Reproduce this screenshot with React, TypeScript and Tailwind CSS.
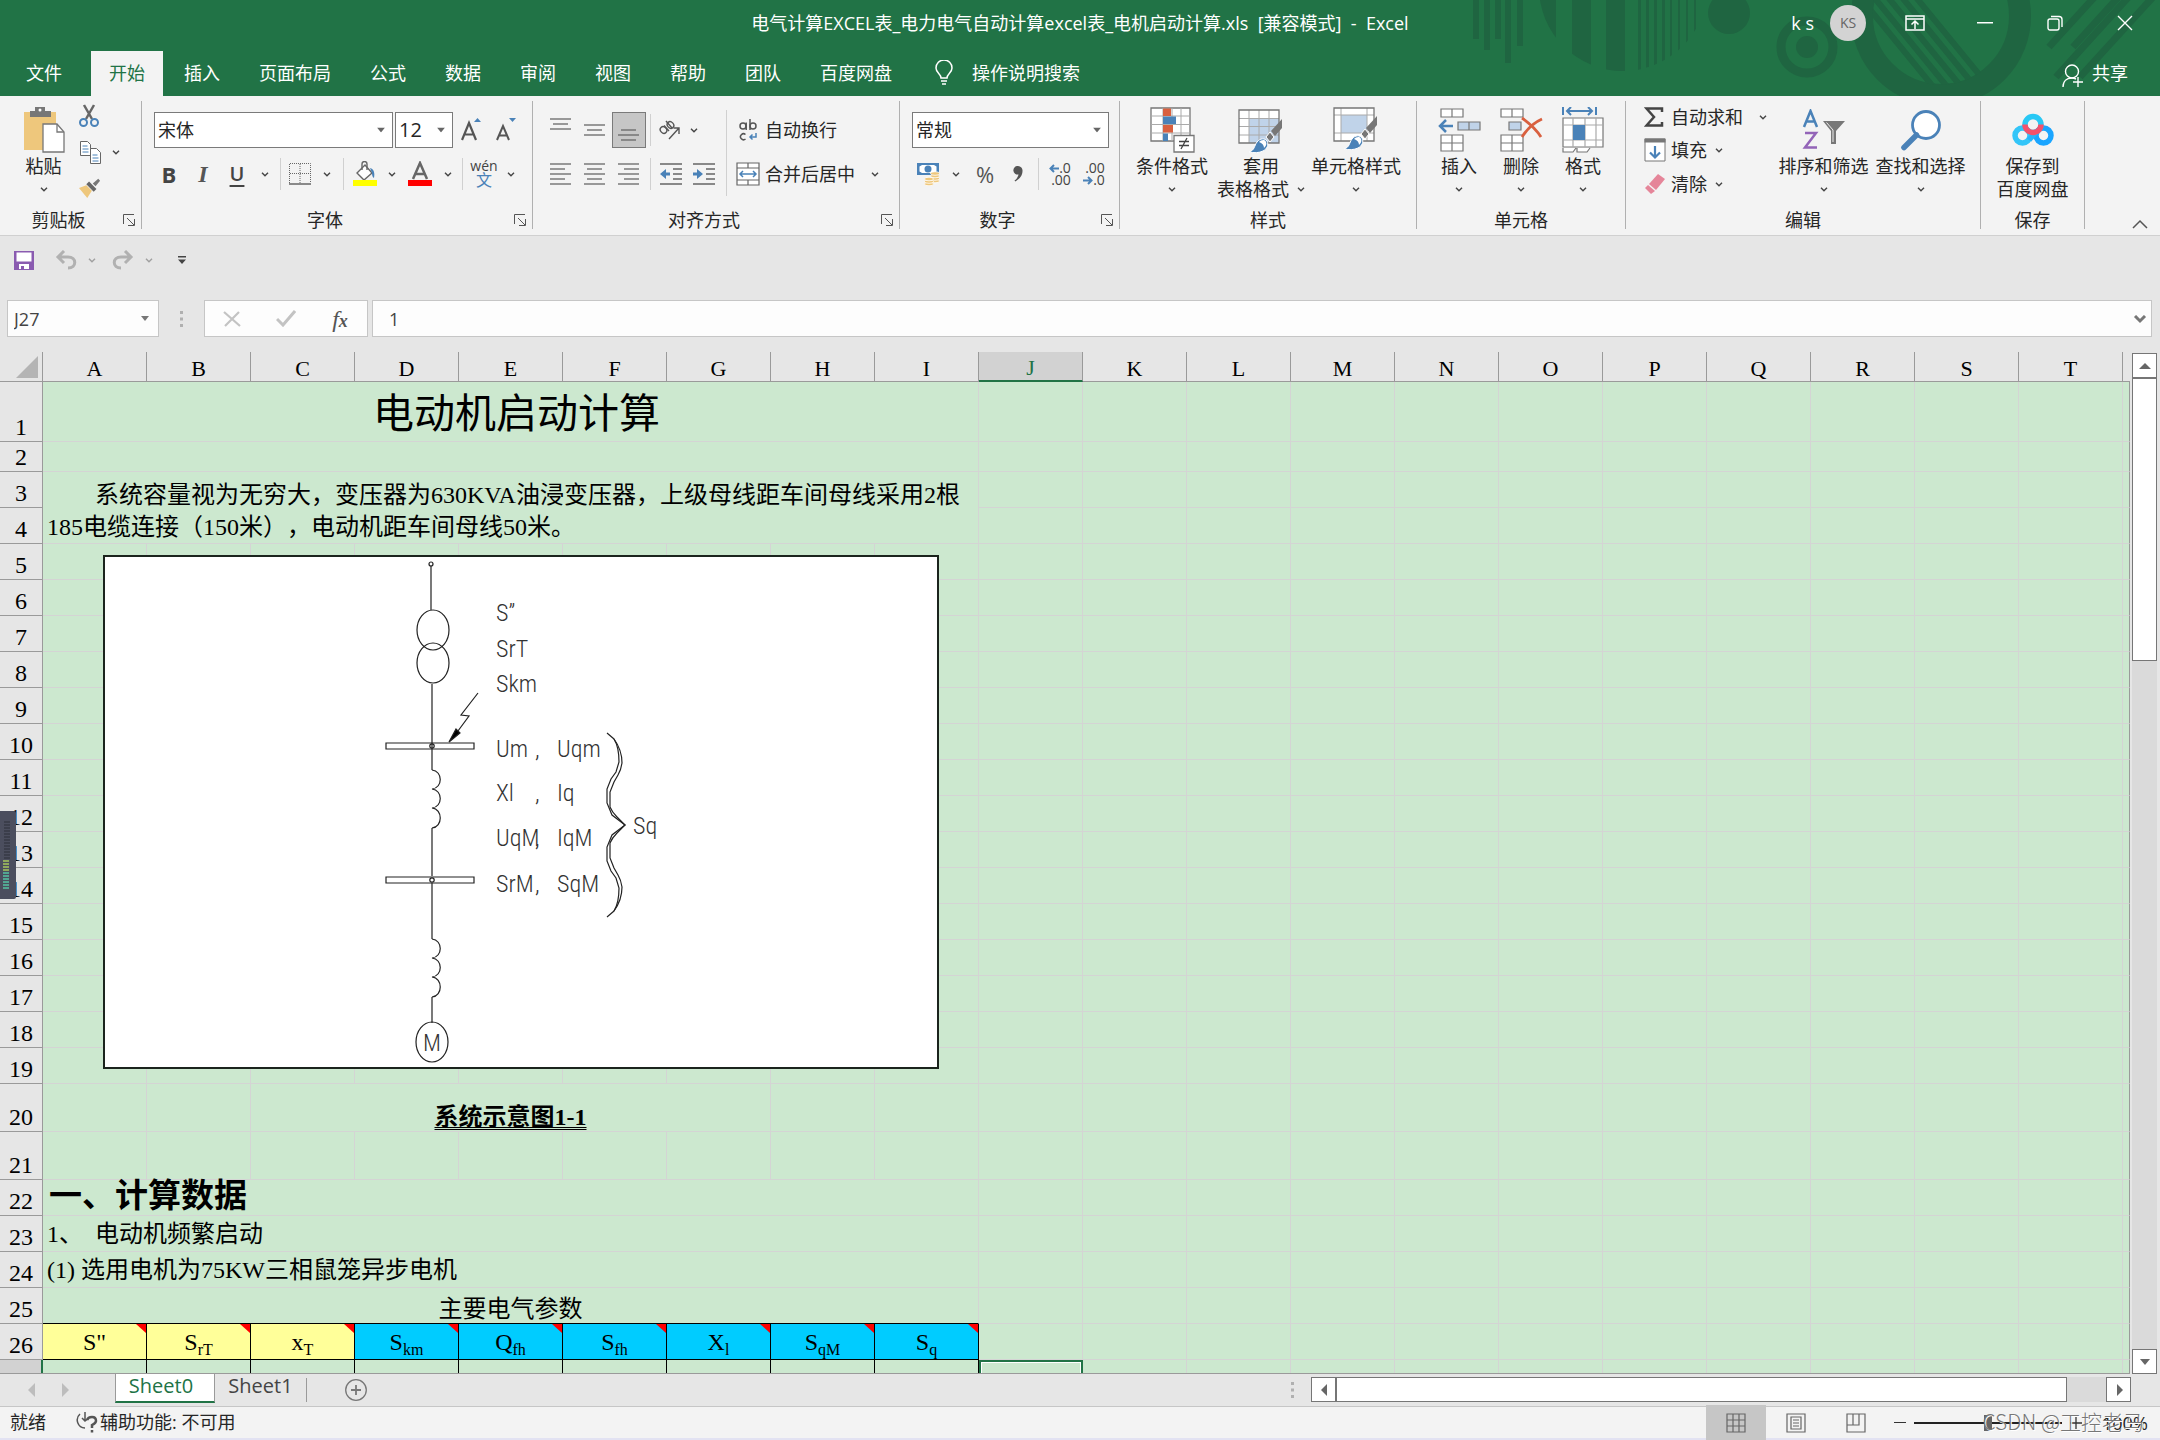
import { useState, type ReactNode } from "react";

const INK = "#444444";
const BLUE = "#4a82b8";

const TABS = ["插入", "页面布局", "公式", "数据", "审阅", "视图", "帮助", "团队", "百度网盘"];
const COLUMNS = "ABCDEFGHIJKLMNOPQRST".split("");
const PARAMS = [
  { base: "S\"", sub: "", fill: "bg-[#ffff99]" },
  { base: "S", sub: "rT", fill: "bg-[#ffff99]" },
  { base: "x", sub: "T", fill: "bg-[#ffff99]" },
  { base: "S", sub: "km", fill: "bg-[#00ccff]" },
  { base: "Q", sub: "fh", fill: "bg-[#00ccff]" },
  { base: "S", sub: "fh", fill: "bg-[#00ccff]" },
  { base: "X", sub: "l", fill: "bg-[#00ccff]" },
  { base: "S", sub: "qM", fill: "bg-[#00ccff]" },
  { base: "S", sub: "q", fill: "bg-[#00ccff]" },
];

function Chevron({ color = INK }: { color?: string }) {
  return (
    <svg width="8" height="5" viewBox="0 0 8 5" fill="none" stroke={color} strokeWidth="1.4" className="shrink-0">
      <path d="M1 .7 4 3.7 7 .7" />
    </svg>
  );
}

function Triangle() {
  return (
    <svg width="8" height="5" viewBox="0 0 8 5" fill="#666" className="pointer-events-none absolute top-1/2 right-2 -translate-y-1/2">
      <path d="M0 0h8L4 5z" />
    </svg>
  );
}

interface ToolProps {
  label: string;
  className?: string;
  children: ReactNode;
}

function Tool({ label, className = "w-[34px]", children }: ToolProps) {
  return (
    <button type="button" aria-label={label} title={label} className={`flex h-9 shrink-0 items-center justify-center ${className}`}>
      {children}
    </button>
  );
}

function More({ label, className = "w-5" }: { label: string; className?: string }) {
  return (
    <Tool label={label} className={className}>
      <Chevron />
    </Tool>
  );
}

function Sep() {
  return <span className="mx-1 h-8 w-px shrink-0 bg-[#d0d0d0]" />;
}

interface GroupProps {
  title: string;
  className: string;
  launcher?: boolean;
  children: ReactNode;
}

function Group({ title, className, launcher, children }: GroupProps) {
  return (
    <section aria-label={title} className={`flex shrink-0 flex-col border-r border-[#b0b0b0] ${className}`}>
      <div className="flex h-[110px]">{children}</div>
      <div className="flex h-[18px] items-center leading-[18px]">
        <span className="flex-1 text-center">{title}</span>
        {launcher && (
          <button type="button" aria-label={`${title}设置`} className="flex w-6 justify-center">
            <svg width="12" height="12" viewBox="0 0 12 12" fill="none" stroke="#555">
              <path d="M.5 10V.5H11M4 4l7 7M11.5 5v6.500H5" />
            </svg>
          </button>
        )}
      </div>
    </section>
  );
}

interface BigToolProps {
  icon: ReactNode;
  line1: string;
  line2?: string;
  plain?: boolean;
  className: string;
}

function BigTool({ icon, line1, line2, plain, className }: BigToolProps) {
  return (
    <button type="button" className={`flex shrink-0 flex-col items-center pt-1 leading-[23px] ${className}`}>
      <span className="flex h-[50px] items-center">{icon}</span>
      <span>{line1}</span>
      <span className="flex h-[23px] items-center gap-2">
        {line2}
        {!plain && <Chevron />}
      </span>
    </button>
  );
}

function AlignIcon({ widths, ys }: { widths: [number, number][]; ys: number[] }) {
  return (
    <svg width="22" height="24" viewBox="0 0 22 24" stroke="#666" strokeWidth="1.3">
      {ys.map((y, i) => (
        <path key={y} d={`M${widths[i % widths.length][0]} ${y}H${widths[i % widths.length][1]}`} />
      ))}
    </svg>
  );
}

function ClipboardGroup() {
  return (
    <Group title="剪贴板" className="w-[142px]" launcher>
      <BigTool
        className="ml-2 w-[71px]"
        line1="粘贴"
        icon={
          <svg width="42" height="48" viewBox="0 0 42 48">
            <path d="M1 6h32v38H1z" fill="#eec77c" />
            <path d="M7 5h5V1h10v4h6v6H7z" fill="#777" />
            <circle cx="17" cy="4" r="1.500" fill="#fff" />
            <path d="M20 18h14l7 8v20H20z" fill="#fff" stroke="#777" strokeWidth="1.300" />
            <path d="M34 18v8h7" fill="none" stroke="#777" strokeWidth="1.300" />
          </svg>
        }
      />
      <div className="-mt-[3px] flex flex-col">
        <Tool label="剪切" className="w-5">
          <svg width="20" height="24" viewBox="0 0 20 24" fill="none" strokeWidth="2">
            <path d="M5 1l8 14M15 1L7 15" stroke="#666" strokeWidth="2.500" />
            <circle cx="4.500" cy="18.500" r="3.500" stroke={BLUE} />
            <circle cx="15.500" cy="18.500" r="3.500" stroke={BLUE} />
          </svg>
        </Tool>
        <div className="flex">
          <Tool label="复制" className="w-[22px]">
            <svg width="21" height="23" viewBox="0 0 21 23" fill="#fff" stroke="#666">
              <path d="M.5.5h7l3 3v11H.5z" />
              <path d="M10.500 7.500h6l4 4v11h-10z" />
              <path d="M2.500 5h5M2.500 8h6M2.500 11h6M12.500 14h5M12.500 17h6M12.500 20h6" stroke={BLUE} />
            </svg>
          </Tool>
          <More label="复制选项" className="w-[30px]" />
        </div>
        <Tool label="格式刷" className="w-[22px]">
          <svg width="24" height="22" viewBox="0 0 24 22">
            <path d="M0 11l8-3 6 6-5 8z" fill="#eec77c" />
            <path d="M8 7l3-3 8 8-3 3z" fill="#666" />
            <path d="M15 6l6-5 2 2-5 6z" fill="#777" />
          </svg>
        </Tool>
      </div>
    </Group>
  );
}

function FontGroup() {
  return (
    <Group title="字体" className="w-[391px]" launcher>
      <div className="flex flex-col gap-2 pt-[11px] pl-[10px]">
        <div className="flex pl-[2px]">
          <label className="relative mr-[2px] block">
            <select aria-label="字体名称" className="h-9 w-[239px] appearance-none border border-[#7a7a7a] bg-white px-[3px]">
              <option>宋体</option>
            </select>
            <Triangle />
          </label>
          <label className="relative block">
            <select aria-label="字号" className="h-9 w-[58px] appearance-none border border-[#7a7a7a] bg-white px-[3px] text-xl">
              <option>12</option>
            </select>
            <Triangle />
          </label>
          <Tool label="增大字号" className="w-[35px]">
            <svg width="20" height="24" viewBox="0 0 20 24" fill="none" stroke="#555" strokeWidth="2.200">
              <path d="M1 22 8 5l7 17M3.500 16.500h9" />
              <path d="M13 4l3.500-4L20 4z" fill={BLUE} stroke="none" />
            </svg>
          </Tool>
          <Tool label="减小字号" className="w-[35px]">
            <svg width="20" height="24" viewBox="0 0 20 24" fill="none" stroke="#555" strokeWidth="2">
              <path d="M1 22 7 8l6 14M3.500 17.500h7" />
              <path d="M13 0h7l-3.500 4z" fill={BLUE} stroke="none" />
            </svg>
          </Tool>
        </div>
        <div className="flex items-center">
          <Tool label="加粗">
            <b className="text-[22px] text-[#444]">B</b>
          </Tool>
          <Tool label="倾斜">
            <i className="font-['Liberation_Serif',serif] text-2xl font-bold text-[#555]">I</i>
          </Tool>
          <Tool label="下划线">
            <u className="text-xl font-semibold text-[#444] underline-offset-4">U</u>
          </Tool>
          <More label="下划线选项" className="w-[22px]" />
          <Sep />
          <Tool label="边框" className="w-[30px]">
            <svg width="22" height="22" viewBox="0 0 22 22" fill="none" stroke="#666">
              <path d="M.5 20V.5h21V20M11 1v19M1 10.500h20" strokeDasharray="1 1" />
              <path d="M0 21h22" strokeWidth="1.500" />
            </svg>
          </Tool>
          <More label="边框选项" className="w-6" />
          <Sep />
          <Tool label="填充颜色">
            <svg width="24" height="26" viewBox="0 0 24 26" fill="none" stroke="#666" strokeWidth="1.400">
              <path d="M4 12 12 4l7 8-8 7z" fill="#fff" />
              <path d="M9 9V3a2.500 2.500 0 0 1 5 0v6" />
              <path d="M17 7c4 1 5 5 4 10-2-1-2-4-2-5z" fill={BLUE} stroke="none" />
              <path d="M0 19h24v6H0z" fill="#ffff00" stroke="none" />
            </svg>
          </Tool>
          <More label="填充颜色选项" />
          <Tool label="字体颜色" className="w-9">
            <svg width="24" height="26" viewBox="0 0 24 26" fill="none" stroke="#666" strokeWidth="2.500">
              <path d="M5 18 12 2l7 16M7.500 13h9" />
              <path d="M0 19h24v6H0z" fill="#ff0000" stroke="none" />
            </svg>
          </Tool>
          <More label="字体颜色选项" />
          <Sep />
          <Tool label="拼音指南">
            <span className="flex flex-col items-center text-sm leading-3 text-[#444]">
              wén
              <span className="text-base leading-4 text-[#4a82b8]">文</span>
            </span>
          </Tool>
          <More label="拼音选项" />
        </div>
      </div>
    </Group>
  );
}

function IndentIcon({ flip }: { flip?: boolean }) {
  return (
    <svg width="22" height="24" viewBox="0 0 22 24" fill="none" stroke="#666" strokeWidth="1.300">
      <path d="M0 2h22M13 7h9M13 12h9M13 17h9M0 22h22" />
      {flip ? (
        <path d="M0 10.500h4V7l6 5-6 5v-3.500H0z" fill={BLUE} stroke="none" />
      ) : (
        <path d="M10 10.500H6V7l-6 5 6 5v-3.500h4z" fill={BLUE} stroke="none" />
      )}
    </svg>
  );
}

function AlignmentGroup() {
  return (
    <Group title="对齐方式" className="w-[367px]" launcher>
      <div className="flex w-[189px] flex-col gap-2 pt-[11px] pl-[11px]">
        <div className="flex items-center">
          <Tool label="顶端对齐">
            <AlignIcon ys={[1, 6, 11]} widths={[[0, 21], [3, 18]]} />
          </Tool>
          <Tool label="垂直居中">
            <AlignIcon ys={[7, 12, 17]} widths={[[0, 21], [3, 18]]} />
          </Tool>
          <Tool label="底端对齐" className="w-[34px] border border-[#7a7a7a] bg-[#c6c6c6]">
            <AlignIcon ys={[12, 17, 22]} widths={[[3, 18], [0, 21]]} />
          </Tool>
          <Sep />
          <Tool label="方向" className="w-[30px]">
            <svg width="22" height="22" viewBox="0 0 22 22" fill="none" stroke="#555" strokeWidth="1.400">
              <ellipse cx="4.500" cy="11" rx="3" ry="3.500" transform="rotate(-45 4.500 11)" />
              <path d="M5 6.500l5 5.500M7 2l6 7" />
              <ellipse cx="11.500" cy="6" rx="3" ry="3.500" transform="rotate(-45 11.500 6)" />
              <path d="M10 20 20 9M14.500 9H20v6" />
            </svg>
          </Tool>
          <More label="方向选项" className="w-[18px]" />
        </div>
        <div className="flex items-center">
          <Tool label="左对齐">
            <AlignIcon ys={[2, 7, 12, 17, 22]} widths={[[0, 21], [0, 15]]} />
          </Tool>
          <Tool label="居中">
            <AlignIcon ys={[2, 7, 12, 17, 22]} widths={[[0, 21], [3, 18]]} />
          </Tool>
          <Tool label="右对齐">
            <AlignIcon ys={[2, 7, 12, 17, 22]} widths={[[0, 21], [6, 21]]} />
          </Tool>
          <Sep />
          <Tool label="减少缩进量" className="w-8">
            <IndentIcon />
          </Tool>
          <Tool label="增加缩进量">
            <IndentIcon flip />
          </Tool>
        </div>
      </div>
      <span className="mx-1 mt-[9px] h-[86px] w-px bg-[#d0d0d0]" />
      <div className="flex flex-col gap-2 pt-[11px]">
        <button type="button" className="flex h-9 items-center">
          <span className="flex w-[34px] justify-center">
            <svg width="18" height="24" viewBox="0 0 18 24" fill="none" stroke="#555" strokeWidth="1.500">
              <circle cx="4" cy="8" r="3" />
              <path d="M7.200 4.500V12M11 1v11" />
              <circle cx="14" cy="8" r="3" />
              <path d="M6.500 16.500a3 3 0 1 0 0 4.500" />
              <path d="M17 15v4h-6M13.500 16.500 11 19l2.500 2.500" stroke={BLUE} />
            </svg>
          </span>
          自动换行
        </button>
        <div className="flex items-center">
          <button type="button" className="flex h-9 items-center">
            <span className="flex w-[34px] justify-center">
              <svg width="24" height="24" viewBox="0 0 24 24" fill="#fff" stroke="#666" strokeWidth="1.200">
                <path d="M1 1h22v22H1zM1 6h22M1 18h22M12 1v5M12 18v5" />
                <path d="M4 12h16M7 9l-3 3 3 3M17 9l3 3-3 3" fill="none" stroke={BLUE} strokeWidth="1.500" />
              </svg>
            </span>
            合并后居中
          </button>
          <More label="合并选项" className="w-10" />
        </div>
      </div>
    </Group>
  );
}

function NumberGroup() {
  return (
    <Group title="数字" className="w-[220px]" launcher>
      <div className="flex flex-col gap-2 pt-[11px] pl-3">
        <label className="relative block w-[197px]">
          <select aria-label="数字格式" className="h-9 w-full appearance-none border border-[#7a7a7a] bg-white px-[3px]">
            <option>常规</option>
          </select>
          <Triangle />
        </label>
        <div className="flex items-center">
          <Tool label="会计数字格式" className="w-8">
            <svg width="24" height="24" viewBox="0 0 24 24">
              <path d="M1 1h22v12H1z" fill={BLUE} />
              <path d="M3.500 4.500 6 3h12l2.500 1.500v5L18 11H6L3.500 9.500z" fill="#fff" />
              <circle cx="12" cy="7" r="3.500" fill={BLUE} />
              <g fill="#eec77c" stroke="#fff" strokeWidth=".8">
                <ellipse cx="19" cy="19" rx="4.500" ry="1.800" />
                <ellipse cx="19" cy="16.500" rx="4.500" ry="1.800" />
                <ellipse cx="19" cy="14" rx="4.500" ry="1.800" />
                <ellipse cx="19" cy="11.500" rx="4.500" ry="1.800" />
                <ellipse cx="13" cy="22" rx="4.500" ry="1.800" />
                <ellipse cx="13" cy="19.500" rx="4.500" ry="1.800" />
                <ellipse cx="13" cy="17" rx="4.500" ry="1.800" />
              </g>
            </svg>
          </Tool>
          <More label="会计格式选项" className="w-6" />
          <Tool label="百分比样式">
            <span className="text-[22px] text-[#555]">%</span>
          </Tool>
          <Tool label="千位分隔样式" className="w-8">
            <svg width="10" height="16" viewBox="0 0 10 16" fill="#555">
              <path d="M5 0a4.300 4.300 0 1 0 .5 8.500C5 11 3.500 13 1.500 14.500l.8 1C6.500 13 9.500 9.500 9.500 5A4.500 4.500 0 0 0 5 0z" />
            </svg>
          </Tool>
          <Sep />
          <Tool label="增加小数位数">
            <span className="flex flex-col items-end text-sm leading-3 text-[#444]">
              <span className="flex items-center">
                <svg width="10" height="9" viewBox="0 0 10 9" fill="none" stroke={BLUE} strokeWidth="2">
                  <path d="M10 4.500H2M5 1 1.500 4.500 5 8" />
                </svg>
                .0
              </span>
              .00
            </span>
          </Tool>
          <Tool label="减少小数位数">
            <span className="flex flex-col items-end text-sm leading-3 text-[#444]">
              .00
              <span className="flex items-center">
                <svg width="10" height="9" viewBox="0 0 10 9" fill="none" stroke={BLUE} strokeWidth="2">
                  <path d="M0 4.500h8M5 1l3.500 3.500L5 8" />
                </svg>
                .0
              </span>
            </span>
          </Tool>
        </div>
      </div>
    </Group>
  );
}

function Brush() {
  return (
    <g>
      <path d="M44 12v9l-7 8-4-5z" fill="#777" />
      <path d="M32 25l4 5-4 5-4-5z" fill="#777" stroke="#fff" />
      <path d="M11 45c6-2 5-6 8-10 3-4 8-4 10-1 2 4 0 8-4 10-4 2-9 2-14 1z" fill={BLUE} stroke="#fff" />
      <path d="M21 35c2-2 6-3 7 0 1 2 0 4-2 6 0-3-2-5-5-6z" fill="#fff" />
    </g>
  );
}

function StylesGroup() {
  return (
    <Group title="样式" className="w-[297px]">
      <BigTool
        className="ml-[9px] w-[86px]"
        line1="条件格式"
        icon={
          <svg width="45" height="46" viewBox="0 0 45 46">
            <path d="M1 1h39v33H1z" fill="#fff" stroke="#777" strokeWidth="1.300" />
            <path d="M1 9h39M1 17.500h39M1 26h39M13 1v33M22 1v33M31 1v33" stroke="#aaa" />
            <path d="M13 1.500h8v7.500h-8zM13 18h10v7.500H13z" fill="#d9603f" />
            <path d="M13 9.500h13V17H13zM13 26.500h5V34h-5z" fill={BLUE} />
            <path d="M24 28.500h20V45H24z" fill="#fff" stroke="#777" strokeWidth="1.300" />
            <path d="M29 34.500h10M29 38.500h10M37 31l-6 11" stroke="#444" strokeWidth="1.300" />
          </svg>
        }
      />
      <BigTool
        className="w-[92px]"
        line1="套用"
        line2="表格格式"
        icon={
          <svg width="46" height="46" viewBox="0 0 46 46">
            <path d="M1 3h40v33H1z" fill="#fff" />
            <path d="M11 11.500h30V36H11z" fill="#c0d3e9" />
            <path d="M1 11.500h40M1 19.500h40M1 28h40M11 3v33M21 3v33M31 3v33" stroke="#aaa" />
            <path d="M1 3h40v33H1z" fill="none" stroke="#777" strokeWidth="1.300" />
            <Brush />
          </svg>
        }
      />
      <BigTool
        className="w-[98px]"
        line1="单元格样式"
        icon={
          <svg width="46" height="46" viewBox="0 0 46 46">
            <path d="M1 1h40v33H1z" fill="#fff" />
            <path d="M8 8h26v18H8z" fill="#c0d3e9" />
            <path d="M1 8h40M1 26h40M8 1v33M34 1v33" stroke="#aaa" />
            <path d="M1 1h40v33H1z" fill="none" stroke="#777" strokeWidth="1.300" />
            <g transform="translate(0 -3)">
              <Brush />
            </g>
          </svg>
        }
      />
    </Group>
  );
}

function CellsGroup() {
  return (
    <Group title="单元格" className="w-[209px]">
      <BigTool
        className="ml-[11px] w-[62px]"
        line1="插入"
        icon={
          <svg width="43" height="44" viewBox="0 0 43 44" fill="#fff" stroke="#777" strokeWidth="1.200">
            <path d="M3 1h22v8H3zM14 1v8M3 27h22v16H3zM14 27v16M3 35h22" />
            <path d="M20 14h22v8H20zM31 14v8" fill="#c0d3e9" />
            <path d="M15 18H2M8 12l-6 6 6 6" fill="none" stroke={BLUE} strokeWidth="2.500" />
          </svg>
        }
      />
      <BigTool
        className="w-[62px]"
        line1="删除"
        icon={
          <svg width="43" height="44" viewBox="0 0 43 44" fill="#fff" stroke="#777" strokeWidth="1.200">
            <path d="M1 1h22v8H1zM12 1v8M1 27h22v16H1zM12 27v16M1 35h22" />
            <path d="M9 14h12v8H9z" fill="#c0d3e9" />
            <path d="M22 10c7 5 14 11 19 19M42 11c-9 4-15 10-20 18" fill="none" stroke="#d9603f" strokeWidth="2.800" />
          </svg>
        }
      />
      <BigTool
        className="w-[62px]"
        line1="格式"
        icon={
          <svg width="42" height="46" viewBox="0 0 42 46" fill="none" stroke="#777" strokeWidth="1.200">
            <path d="M1 0v8M34 0v8M5 4h25M9 0 5 4l4 4M26 0l4 4-4 4" stroke={BLUE} strokeWidth="2" />
            <path d="M1 11h40v29H1z" fill="#fff" />
            <path d="M1 18h40M1 33h40M11 11v29M23 11v29M34 11v29" stroke="#aaa" />
            <path d="M11 18h12v15H11z" fill={BLUE} stroke="none" />
            <path d="M1 41v4h10l3-4M15 41v4h10l3-4" fill="#fff" />
          </svg>
        }
      />
    </Group>
  );
}

function EditGroup() {
  return (
    <Group title="编辑" className="w-[355px]">
      <div className="flex w-[150px] flex-col pl-[14px]">
        <button type="button" className="flex h-8 items-center">
          <span className="w-[31px] pl-1">
            <svg width="20" height="20" viewBox="0 0 20 20" fill="none" stroke="#444" strokeWidth="2.500">
              <path d="M18 5V1.500H2.500L10 10l-7.500 8.500H18V15" />
            </svg>
          </span>
          自动求和
          <span className="ml-4">
            <Chevron />
          </span>
        </button>
        <button type="button" className="flex h-[34px] items-center">
          <span className="w-[31px] pl-1">
            <svg width="22" height="24" viewBox="0 0 22 24">
              <path d="M1 1h20v22H1z" fill="#fff" stroke="#777" />
              <path d="M.5.5h21v4H.5z" fill="#777" />
              <path d="M11 8v11M6 14.500l5 5 5-5" fill="none" stroke={BLUE} strokeWidth="2.200" />
            </svg>
          </span>
          填充
          <span className="ml-2">
            <Chevron />
          </span>
        </button>
        <button type="button" className="flex h-[34px] items-center">
          <span className="w-[31px] pl-1">
            <svg width="22" height="20" viewBox="0 0 22 20" fill="#e58599">
              <path d="M14 0l7 5-9 11-7-6z" />
              <path d="M4 11l7 6-4 3-6-6z" />
            </svg>
          </span>
          清除
          <span className="ml-2">
            <Chevron />
          </span>
        </button>
      </div>
      <BigTool
        className="w-[95px]"
        line1="排序和筛选"
        icon={
          <svg width="44" height="42" viewBox="0 0 44 42" fill="none" strokeWidth="2.500">
            <path d="M2 18 8.500 2 15 18M4.500 12.500h8" stroke={BLUE} />
            <path d="M3 24h11L3 38.500h12" stroke="#9364b8" />
            <path d="M21 12h22l-9 10v13h-5V22z" fill="#777" />
            <path d="M24.500 13.500 31 21v12" stroke="#eee" strokeWidth="1" />
          </svg>
        }
      />
      <BigTool
        className="w-[99px]"
        line1="查找和选择"
        icon={
          <svg width="42" height="42" viewBox="0 0 42 42" fill="#fff" stroke={BLUE}>
            <circle cx="26" cy="16" r="13.500" strokeWidth="2.800" />
            <path d="M16.500 26 4 38.500" strokeWidth="5.500" strokeLinecap="round" />
          </svg>
        }
      />
    </Group>
  );
}

function SaveGroup() {
  return (
    <Group title="保存" className="w-[104px]">
      <BigTool
        plain
        className="w-[103px]"
        line1="保存到"
        line2="百度网盘"
        icon={
          <svg width="42" height="34" viewBox="0 0 42 34" fill="none" strokeWidth="5.500">
            <circle cx="10.500" cy="22.500" r="7.500" stroke="#33c5f8" />
            <circle cx="31.500" cy="22.500" r="7.500" stroke="#1aa5ff" />
            <path d="M17 27l8-9" stroke="#26b4fb" />
            <circle cx="21" cy="11.500" r="8" stroke="#28c8f5" />
            <path d="M13 11.500a8 8 0 0 0 16 0" stroke="#f4516c" />
          </svg>
        }
      />
    </Group>
  );
}

function HeaderArt() {
  return (
    <svg width="720" height="96" viewBox="0 0 720 96" fill="#1f6541" className="pointer-events-none absolute top-0 right-0">
      <defs>
        <clipPath id="disc">
          <circle cx="183" cy="-13" r="84" />
        </clipPath>
        <clipPath id="ring">
          <circle cx="501" cy="16" r="69" />
        </clipPath>
      </defs>
      <path d="M33 0h6v39h-6zM44 0h6v50h-6zM55 0h6v39h-6zM65 0h6v63h-6zM77 0h6v46h-6z" />
      <path
        clipPath="url(#disc)"
        d="M99 0h17v80H99zM132 0h19v80h-19zM166 0h19v80h-19zM198 0h3v80h-3zM206 0h3v80h-3zM214 0h3v80h-3zM222 0h3v80h-3zM230 0h2v80h-2zM238 0h2v80h-2zM246 0h2v80h-2zM254 0h2v80h-2z"
      />
      <circle cx="289" cy="13" r="21" />
      <circle cx="367" cy="47" r="26" fill="none" stroke="#1f6541" strokeWidth="9" />
      <circle cx="367" cy="47" r="11" />
      <circle cx="501" cy="16" r="79" fill="none" stroke="#1f6541" strokeWidth="22" />
      <path
        clipPath="url(#ring)"
        fill="none"
        stroke="#1f6541"
        strokeWidth="6"
        d="M414-10l90 110M428-10l90 110M442-10l90 110M456-10l90 110M470-10l90 110"
      />
      <path fill="none" stroke="#1f6541" strokeWidth="7" d="M609 47 660-9M633 47 684-9M616 77 694-9M640 77l84-92" />
    </svg>
  );
}

function Header() {
  return (
    <header className="relative flex flex-col bg-[#217346] text-white">
      <HeaderArt />
      <div className="relative grid h-[45px] grid-cols-[1fr_auto_1fr] items-center">
        <span />
        <h1 className="whitespace-pre">电气计算EXCEL表_电力电气自动计算excel表_电机启动计算.xls  [兼容模式]  -  Excel</h1>
        <div className="flex items-center justify-end">
          <span className="mr-4">k s</span>
          <span className="mr-[14px] flex size-9 items-center justify-center rounded-full bg-[#d3d3d3] text-sm text-[#666]">KS</span>
          <Tool label="功能区显示选项" className="w-[70px]">
            <svg width="20" height="16" viewBox="0 0 20 16" fill="none" stroke="#fff" strokeWidth="1.500">
              <path d="M1 1h18v14H1zM1 4h18M10 14V7M6.500 9.500 10 6l3.500 3.500" />
            </svg>
          </Tool>
          <Tool label="最小化" className="w-[70px]">
            <svg width="16" height="2" viewBox="0 0 16 2">
              <path d="M0 0h16v1.500H0z" fill="#fff" />
            </svg>
          </Tool>
          <Tool label="还原" className="w-[70px]">
            <svg width="16" height="16" viewBox="0 0 16 16" fill="none" stroke="#fff" strokeWidth="1.400">
              <rect x="1" y="4" width="11" height="11" rx="2" />
              <path d="M4 1.500h8q3 0 3 3V12" />
            </svg>
          </Tool>
          <Tool label="关闭" className="w-[70px]">
            <svg width="16" height="16" viewBox="0 0 16 16" stroke="#fff" strokeWidth="1.400">
              <path d="M1 1l14 14M15 1 1 15" />
            </svg>
          </Tool>
        </div>
      </div>
      <nav className="relative mt-[6px] flex h-[45px] gap-[3px]">
        <button type="button" className="px-[26px] pb-[2px]">文件</button>
        <button type="button" className="bg-[#f3f3f3] px-[18px] pb-[2px] text-[#217346]">开始</button>
        {TABS.map((tab) => (
          <button key={tab} type="button" className="px-[18px] pb-[2px]">
            {tab}
          </button>
        ))}
        <button type="button" className="ml-[22px] flex items-center gap-[18px] pb-[2px]">
          <svg width="19" height="25" viewBox="0 0 19 25" fill="none" stroke="#fff" strokeWidth="1.500">
            <path d="M6 18c0-4-5-5-5-10a8 8 0 0 1 16 0c0 5-5 6-5 10zM6 21h6M7 24h4" />
          </svg>
          操作说明搜索
        </button>
        <button type="button" className="mr-8 ml-auto flex items-center gap-2 pb-[2px]">
          <svg width="22" height="24" viewBox="0 0 22 24" fill="none" stroke="#fff" strokeWidth="1.400" className="mt-[6px]">
            <ellipse cx="10" cy="7.500" rx="6.500" ry="6.500" />
            <path d="M1 23c0-6 4-9 9-9 2 0 3 .5 4 1M16 13v10M11 18h10" />
          </svg>
          共享
        </button>
      </nav>
    </header>
  );
}

function QuickAccess() {
  return (
    <div className="flex h-16 items-center pb-4 pl-[14px]">
      <Tool label="保存" className="w-5">
        <svg width="20" height="19" viewBox="0 0 20 19">
          <path d="M0 0h20v19H0z" fill="#8a5bb0" />
          <path d="M2.500 1.500h15v9h-15zM5 13h10v5H5z" fill="#fff" />
          <path d="M7 15h3v3H7z" fill="#8a5bb0" />
        </svg>
      </Tool>
      <Tool label="撤消" className="ml-[17px] w-[30px]">
        <svg width="22" height="20" viewBox="0 0 22 20" fill="none" stroke="#b1b1b1" strokeWidth="3">
          <path d="M9 1 3 7l6 6M4 7h9c9 0 9 11 0 11" />
        </svg>
      </Tool>
      <Tool label="撤消选项" className="w-[22px]">
        <Chevron color="#a0a0a0" />
      </Tool>
      <Tool label="恢复" className="ml-[5px] w-[30px]">
        <svg width="22" height="20" viewBox="0 0 22 20" fill="none" stroke="#b1b1b1" strokeWidth="3">
          <path d="m13 1 6 6-6 6M18 7H9C0 7 0 18 9 18" />
        </svg>
      </Tool>
      <Tool label="恢复选项" className="w-[22px]">
        <Chevron color="#a0a0a0" />
      </Tool>
      <Tool label="自定义快速访问工具栏" className="ml-2 w-7">
        <svg width="8" height="8" viewBox="0 0 8 8" fill="#444">
          <path d="M0 0h8v1.500H0zM0 3.500h8L4 8z" />
        </svg>
      </Tool>
    </div>
  );
}

function FormulaBar() {
  const [value, setValue] = useState("1");

  return (
    <div className="flex items-start pr-2 pb-[15px] pl-[7px] text-[#444]">
      <label className="relative block">
        <input
          aria-label="名称框"
          defaultValue="J27"
          className="block h-[37px] w-[152px] border border-[#c6c6c6] bg-[#fdfdfd] px-[6px]"
        />
        <svg width="8" height="5" viewBox="0 0 8 5" fill="#777" className="absolute top-4 right-[10px]">
          <path d="M0 0h8L4 5z" />
        </svg>
      </label>
      <span className="flex h-[37px] w-[45px] items-center justify-center">
        <svg width="3" height="16" viewBox="0 0 3 16" fill="#b0b0b0">
          <path d="M0 0h3v3H0zM0 6.500h3v3H0zM0 13h3v3H0z" />
        </svg>
      </span>
      <div className="flex h-[37px] w-[164px] items-center border border-[#c6c6c6] bg-[#fdfdfd]">
        <Tool label="取消" className="w-[54px]">
          <svg width="18" height="16" viewBox="0 0 18 16" stroke="#c3c3c3" strokeWidth="2.200">
            <path d="M1 1l16 14M16 1 2 15" />
          </svg>
        </Tool>
        <Tool label="输入" className="w-[54px]">
          <svg width="20" height="17" viewBox="0 0 20 17" fill="none" stroke="#c3c3c3" strokeWidth="3">
            <path d="m1 9 6 6L19 1" />
          </svg>
        </Tool>
        <Tool label="插入函数" className="w-[54px]">
          <i className="font-['Liberation_Serif',serif] text-2xl text-[#555]">
            f<span className="text-lg font-bold">x</span>
          </i>
        </Tool>
      </div>
      <label className="relative ml-1 block flex-1">
        <input
          aria-label="编辑栏"
          value={value}
          onChange={(e) => setValue(e.target.value)}
          className="block h-[37px] w-full border border-[#c6c6c6] bg-[#fdfdfd] px-4"
        />
        <svg
          width="16"
          height="9"
          viewBox="0 0 16 9"
          fill="none"
          stroke="#777"
          strokeWidth="3"
          className="absolute top-[15px] right-1"
        >
          <path d="m3 1 5 5 5-5" />
        </svg>
      </label>
    </div>
  );
}

function rowHeight(n: number) {
  if (n === 1) return "h-[60px]";
  if (n === 2) return "h-[30px]";
  if (n === 20 || n === 21) return "h-12";
  return "h-9";
}

// The left block of a row, columns A to I. Several rows are merged across it.
function leadingCells(n: number): ReactNode {
  const merged = "border-r border-b border-[#d4d4d4] p-0 px-1";
  if (n === 1) {
    return (
      <td colSpan={9} className={`${merged} pt-1 pl-4 text-center text-[41px] leading-[50px]`}>
        电动机启动计算
      </td>
    );
  }
  if (n === 3) {
    return (
      <td colSpan={9} rowSpan={2} className={`${merged} align-bottom leading-8 whitespace-nowrap [text-spacing-trim:space-all]`}>
        <span className="pl-12">系统容量视为无穷大，变压器为630KVA油浸变压器，上级母线距车间母线采用2根</span>
        <br />
        185电缆连接（150米），电动机距车间母线50米。
      </td>
    );
  }
  if (n === 4) return null;
  if (n === 20) {
    return (
      <>
        <Blank count={2} />
        <td colSpan={5} className={`${merged} text-center align-bottom leading-7 font-bold`}>
          <span className="underline decoration-double decoration-1 underline-offset-2">系统示意图1-1</span>
        </td>
        <Blank count={2} />
      </>
    );
  }
  if (n === 22) {
    return (
      <td colSpan={9} className={`${merged} pl-[6px] align-top text-[33px] leading-8 font-bold`}>
        一、计算数据
      </td>
    );
  }
  if (n === 23) {
    return (
      <td colSpan={9} className={`${merged} whitespace-pre`}>
        1、<span className="pl-3">电动机频繁启动</span>
      </td>
    );
  }
  if (n === 24) {
    return (
      <td colSpan={9} className={merged}>
        (1) 选用电机为75KW三相鼠笼异步电机
      </td>
    );
  }
  if (n === 25) {
    return (
      <td colSpan={9} className="border-r border-b border-r-[#d4d4d4] border-b-black p-0 text-center align-bottom">
        主要电气参数
      </td>
    );
  }
  if (n === 26) {
    return PARAMS.map((param, i) => (
      <td key={i} className={`relative border-r border-b border-black p-0 text-center ${param.fill}`}>
        {param.base}
        <span className="relative top-[5px] text-base leading-none">{param.sub}</span>
        <span className="absolute top-0 right-0 border-t-[9px] border-l-[10px] border-t-[#ff0000] border-l-transparent" />
      </td>
    ));
  }
  if (n === 2) return <td colSpan={9} className={merged} />;
  return <Blank count={9} dark={n === 27} />;
}

function Blank({ count, dark }: { count: number; dark?: boolean }) {
  return Array.from({ length: count }, (_, i) => (
    <td key={i} className={`border-r border-b p-0 ${dark ? "border-black" : "border-[#d4d4d4]"}`} />
  ));
}

function Grid() {
  return (
    <table className="w-full table-fixed border-separate border-spacing-0 bg-[#cce8cf] font-['Liberation_Serif','Noto_Sans_CJK_SC',serif] text-2xl leading-7 font-normal text-black">
      <colgroup>
        <col className="w-[43px]" />
        {COLUMNS.map((c) => (
          <col key={c} className="w-[104px]" />
        ))}
        <col />
      </colgroup>
      <thead className="bg-[#e6e6e6]">
        <tr className="h-[30px]">
          <th className="border-r border-b border-[#9a9a9a] p-0">
            <svg width="22" height="22" viewBox="0 0 22 22" className="ml-auto mr-1">
              <path d="M22 0v22H0z" fill="#b4b4b4" />
            </svg>
          </th>
          {COLUMNS.map((c) => (
            <th
              key={c}
              scope="col"
              className={
                c === "J"
                  ? "border-r border-b-2 border-r-[#9a9a9a] border-b-[#217346] bg-[#d2d2d2] p-0 align-bottom text-[22px] leading-6 font-normal text-[#217346]"
                  : "border-r border-b border-[#9a9a9a] p-0 align-bottom text-[22px] leading-6 font-normal"
              }
            >
              {c}
            </th>
          ))}
          <td className="border-b border-[#9a9a9a] p-0" />
        </tr>
      </thead>
      <tbody>
        {Array.from({ length: 27 }, (_, i) => i + 1).map((n) => (
          <tr key={n} className={rowHeight(n)}>
            {n === 27 ? (
              <th scope="row" aria-label="27" className="border-r-2 border-b border-r-[#217346] border-b-[#9a9a9a] bg-[#d2d2d2] p-0" />
            ) : (
              <th scope="row" className="border-r border-b border-[#9a9a9a] bg-[#e6e6e6] p-0 align-bottom leading-7 font-normal">
                {n}
              </th>
            )}
            {leadingCells(n)}
            {n === 27 ? (
              <td className="border-2 border-[#217346] p-0 shadow-[inset_0_0_0_1px_white]" />
            ) : (
              <Blank count={1} />
            )}
            <Blank count={10} />
            <td className="border-r border-b border-r-[#9a9a9a] border-b-[#d4d4d4] p-0" />
          </tr>
        ))}
      </tbody>
    </table>
  );
}

function Coil({ y }: { y: number }) {
  return <path d={`M327 ${y}c11 1 11 18 0 19c11 1 11 18 0 19c11 1 11 19 0 20`} />;
}

const LABELS: [number, number, string][] = [
  [391, 64, "S”"],
  [391, 100, "SrT"],
  [391, 135, "Skm"],
  [391, 200, "Um"],
  [430, 200, ","],
  [452, 200, "Uqm"],
  [391, 244, "Xl"],
  [430, 244, ","],
  [452, 244, "Iq"],
  [391, 289, "UqM"],
  [430, 289, ","],
  [452, 289, "IqM"],
  [391, 335, "SrM"],
  [430, 335, ","],
  [452, 335, "SqM"],
  [528, 277, "Sq"],
];

// One-line system diagram: supply, transformer, two busbars, cable reactances, motor.
function SystemDiagram() {
  return (
    <svg
      viewBox="0 0 832 510"
      role="img"
      aria-label="系统示意图"
      className="absolute top-[203px] left-[103px] h-[514px] w-[836px] border-2 border-[#1b241d] bg-white"
    >
      <g fill="none" stroke="#222" strokeWidth="1.200">
        <circle cx="326" cy="7" r="2" />
        <path d="M326 9v44M327 127v66M327 271v48M327 326v56M327 440v26" />
        <ellipse cx="328" cy="73" rx="16" ry="20" />
        <ellipse cx="328" cy="106" rx="16" ry="20" />
        <path d="M281 186h88v6h-88zM281 320h88v6h-88z" />
        <circle cx="327" cy="189" r="2.200" />
        <circle cx="327" cy="323" r="2.200" />
        <path d="M327 193v20" />
        <Coil y={213} />
        <Coil y={382} />
        <path d="M373 136l-17 22 8 1-14 19" />
        <path d="M344 185l7-13 4 4z" fill="#000" />
        <ellipse cx="327" cy="485" rx="16" ry="20" />
        <path d="M502 176l7 6q8 11 8 24-1 7-4 12l-4 7-4 10v15q2 5 7 10l8 8-8 8q-5 5-7 10v15l4 10 4 7q3 5 4 12 0 13-8 24l-7 6" />
        <path d="M509 182q5 8 5 23l-3 10-5 7-4 10v14l5 12 13 10-13 10-5 12v14l4 10 5 7 3 10q0 15-5 23" />
      </g>
      <g className="fill-[#333] font-['Roboto_Condensed','Liberation_Sans_Narrow',sans-serif] text-2xl font-light">
        {LABELS.map(([x, y, text]) => (
          <text key={`${x}-${y}`} x={x} y={y}>
            {text}
          </text>
        ))}
        <text x="327" y="494" textAnchor="middle">
          M
        </text>
      </g>
    </svg>
  );
}

// Small audio level meter docked to the left edge of the window.
function LevelMeter() {
  return (
    <svg width="17" height="90" viewBox="0 0 17 90" className="absolute top-[459px] left-0">
      <path d="M0 0h14q2 0 2 2v84q0 2-2 2H0z" fill="#4b4e5e" />
      {Array.from({ length: 13 }, (_, i) => (
        <path key={i} d={`M4 ${11 + i * 3}h6`} stroke="#2c2e38" />
      ))}
      {Array.from({ length: 10 }, (_, i) => (
        <path key={i} d={`M3 ${50 + i * 3}h6`} stroke={i < 4 ? "#a6c95c" : "#55c4a4"} strokeWidth="1.500" />
      ))}
    </svg>
  );
}

function ScrollButton({ label, d, className }: { label: string; d: string; className: string }) {
  return (
    <button type="button" aria-label={label} className={`flex shrink-0 items-center justify-center border border-[#767676] bg-white ${className}`}>
      <svg width="12" height="12" viewBox="0 0 12 12" fill="#666">
        <path d={d} />
      </svg>
    </button>
  );
}

function Sheet() {
  return (
    <main className="flex min-h-0 flex-1">
      <div className="relative min-w-0 flex-1 overflow-hidden border-b border-[#9a9a9a]">
        <Grid />
        <SystemDiagram />
        <LevelMeter />
      </div>
      <div className="mr-[3px] ml-[2px] flex w-[25px] flex-col pt-px">
        <ScrollButton label="向上滚动" className="h-[25px]" d="M0 9h12L6 3z" />
        <div className="flex flex-1 flex-col bg-[#dadada]">
          <div className="h-[283px] border border-[#767676] bg-white" />
        </div>
        <ScrollButton label="向下滚动" className="h-[25px]" d="M1 3h10L6 9z" />
      </div>
    </main>
  );
}

function SheetTabs() {
  return (
    <div className="flex h-[33px] items-start border-b border-[#c6c6c6] text-xl text-[#444]">
      <div className="flex w-[115px] items-center gap-[27px] self-center pl-7">
        {["M7 0v14L0 7z", "M0 0v14l7-7z"].map((d, i) => (
          <button key={d} type="button" aria-label={i ? "下一张" : "上一张"}>
            <svg width="7" height="14" viewBox="0 0 7 14" fill="#bdbdbd">
              <path d={d} />
            </svg>
          </button>
        ))}
      </div>
      <button type="button" className="h-[29px] w-[100px] border-x border-b-2 border-x-[#9a9a9a] border-b-[#217346] bg-white pr-2 pb-[3px] leading-6 text-[#217346]">
        Sheet0
      </button>
      <button type="button" className="h-[27px] w-[91px] pb-[3px] leading-6">
        Sheet1
      </button>
      <span className="mt-1 h-6 w-px bg-[#9a9a9a]" />
      <button type="button" aria-label="新工作表" className="mt-[5px] ml-[38px]">
        <svg width="22" height="22" viewBox="0 0 22 22" fill="none" stroke="#777" strokeWidth="1.300">
          <circle cx="11" cy="11" r="10.300" />
          <path d="M11 6v10M6 11h10" strokeWidth="1.800" />
        </svg>
      </button>
      <div className="mt-[3px] mr-[29px] ml-auto flex h-[25px] items-center">
        <svg width="3" height="16" viewBox="0 0 3 16" fill="#b0b0b0" className="mr-[17px]">
          <path d="M0 0h3v3H0zM0 6.500h3v3H0zM0 13h3v3H0z" />
        </svg>
        <ScrollButton label="向左滚动" className="h-[25px] w-[25px]" d="M9 0v12L3 6z" />
        <div className="flex h-full w-[770px] bg-[#dadada]">
          <div className="h-full w-[731px] border border-[#767676] bg-white" />
        </div>
        <ScrollButton label="向右滚动" className="h-[25px] w-[25px]" d="M4 0v12l6-6z" />
      </div>
    </div>
  );
}

function StatusBar() {
  const [zoom, setZoom] = useState(100);

  return (
    <footer className="relative flex h-[33px] items-center border-b-2 border-[#e2e2f2] bg-[#f3f3f3] pl-[10px]">
      <span className="pb-[2px]">就绪</span>
      <button type="button" className="ml-[30px] flex items-center gap-[2px] pb-[2px]">
        <svg width="22" height="22" viewBox="0 0 22 22" fill="none" stroke="#555" strokeWidth="1.500">
          <path d="M9 1v8M9 17A8 8 0 0 1 4 3M6 7l3 3 4-3" />
          <path d="M11 9q1-3 5-3t4 4q0 2-4 4v3M16 19v2.500" strokeWidth="2.500" />
        </svg>
        辅助功能: 不可用
      </button>
      <div className="ml-auto flex h-full items-center">
        <Tool label="普通" className="w-[60px] bg-[#c6c6c6]">
          <svg width="20" height="20" viewBox="0 0 20 20" fill="none" stroke="#666" strokeWidth="1.200">
            <path d="M1 1h18v18H1zM1 7h18M1 13h18M7 1v18M13 1v18" />
          </svg>
        </Tool>
        <Tool label="页面布局" className="w-[60px]">
          <svg width="20" height="20" viewBox="0 0 20 20" fill="none" stroke="#666" strokeWidth="1.200">
            <path d="M1 1h18v18H1zM5 4h10v12H5zM7 7h6M7 10h6M7 13h6" />
          </svg>
        </Tool>
        <Tool label="分页预览" className="w-[60px]">
          <svg width="20" height="20" viewBox="0 0 20 20" fill="none" stroke="#666" strokeWidth="1.200">
            <path d="M1 1h18v18H1zM1 12h12V1M7 1v11" />
          </svg>
        </Tool>
        <Tool label="缩小" className="w-7">
          <span className="h-px w-3 bg-[#333]" />
        </Tool>
        <input
          type="range"
          aria-label="显示比例"
          min={10}
          max={190}
          value={zoom}
          onChange={(e) => setZoom(Number(e.target.value))}
          className="h-4 w-[148px] appearance-none bg-[linear-gradient(#222,#222)] bg-[length:100%_2px] bg-center bg-no-repeat [&::-webkit-slider-thumb]:h-4 [&::-webkit-slider-thumb]:w-2 [&::-webkit-slider-thumb]:appearance-none [&::-webkit-slider-thumb]:bg-[#666]"
        />
        <Tool label="放大" className="w-7">
          <svg width="12" height="12" viewBox="0 0 12 12" stroke="#333" strokeWidth="1.300">
            <path d="M6 0v12M0 6h12" />
          </svg>
        </Tool>
        <button type="button" className="ml-3 w-[58px] text-left text-[#222]">{zoom}%</button>
      </div>
      <span className="pointer-events-none absolute right-4 bottom-[3px] font-['Noto_Sans_CJK_SC',sans-serif] text-[21px] leading-7 font-light text-[#777] [text-shadow:1px_1px_0_white]">
        CSDN @工控老马
      </span>
    </footer>
  );
}

export default function App() {
  return (
    <div className="flex h-screen flex-col overflow-hidden bg-[#e6e6e6] font-['Open_Sans','Noto_Sans_CJK_SC',sans-serif] text-lg leading-6 whitespace-nowrap text-[#262626]">
      <Header />
      <div className="flex border-b border-[#d0d0d0] bg-[#f3f3f3] pt-[5px] pb-[6px]">
        <ClipboardGroup />
        <FontGroup />
        <AlignmentGroup />
        <NumberGroup />
        <StylesGroup />
        <CellsGroup />
        <EditGroup />
        <SaveGroup />
        <button type="button" aria-label="折叠功能区" className="mr-3 ml-auto self-end">
          <svg width="16" height="10" viewBox="0 0 16 10" fill="none" stroke="#555" strokeWidth="1.500">
            <path d="m1 9 7-7 7 7" />
          </svg>
        </button>
      </div>
      <QuickAccess />
      <FormulaBar />
      <Sheet />
      <SheetTabs />
      <StatusBar />
    </div>
  );
}
